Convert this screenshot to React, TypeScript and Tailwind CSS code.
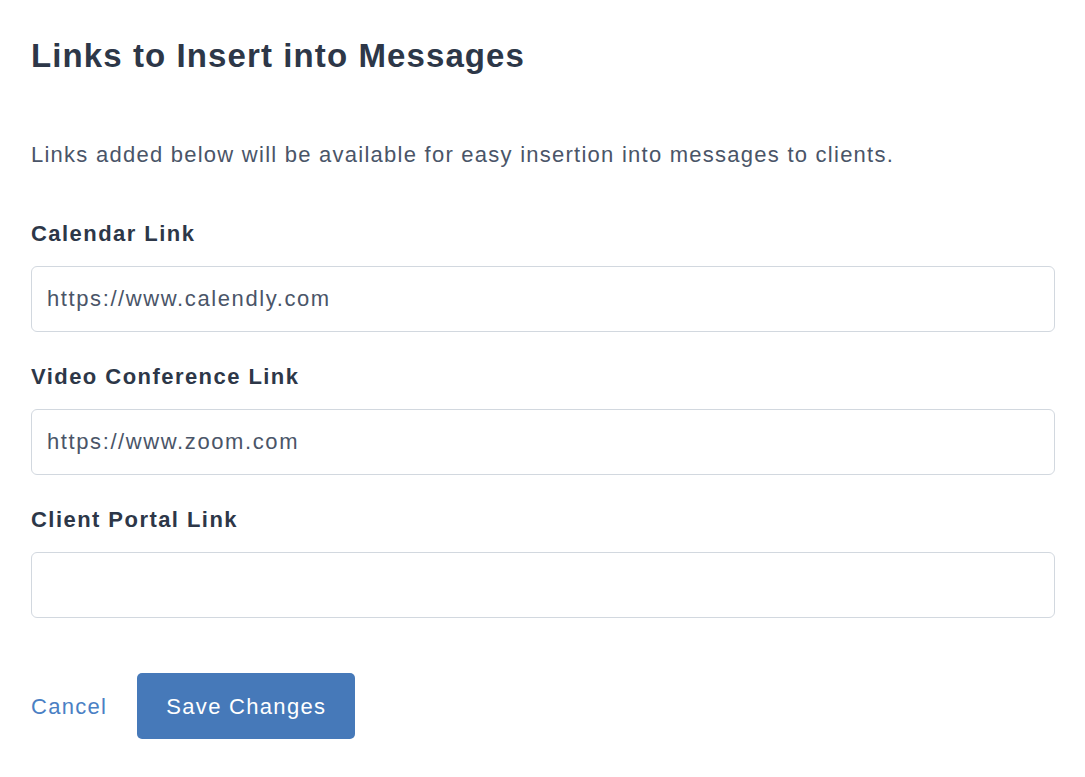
import React, { useState } from 'react';

export default function App() {
  const [calendar, setCalendar] = useState('https://www.calendly.com');
  const [video, setVideo] = useState('https://www.zoom.com');
  const [portal, setPortal] = useState('');

  const fields = [
    { label: 'Calendar Link', value: calendar, set: setCalendar },
    { label: 'Video Conference Link', value: video, set: setVideo },
    { label: 'Client Portal Link', value: portal, set: setPortal },
  ];

  return (
    <div className="min-h-screen bg-white font-['Liberation_Sans',Arial,sans-serif] pl-[31px] pr-[30px] pt-[36px]">
      <h1 className="text-[33px] leading-[40px] font-bold tracking-[1.1px] text-[#2d3748]">Links to Insert into Messages</h1>

      <p className="mt-[65px] text-[22px] leading-[28px] tracking-[1.25px] text-[#4a5568]">
        Links added below will be available for easy insertion into messages to clients.
      </p>

      <div className="mt-[51px] flex flex-col gap-[31px]">
        {fields.map((f) => (
          <div key={f.label} className="flex flex-col">
            <label className="text-[22px] leading-[28px] font-bold tracking-[1.45px] text-[#2d3748]">{f.label}</label>
            <input
              value={f.value}
              onChange={(e) => f.set(e.target.value)}
              className="mt-[18px] h-[66px] w-full rounded-[6px] border border-[#d2d8df] bg-white px-[15px] text-[22px] tracking-[1.6px] text-[#4a5568] outline-none"
            />
          </div>
        ))}
      </div>

      <div className="mt-[55px] flex items-center gap-[30px]">
        <button className="text-[22px] tracking-[1.3px] text-[#4a80c4]">Cancel</button>
        <button className="h-[66px] w-[218px] rounded-[5px] bg-[#4679b9] text-[22px] tracking-[1.3px] text-white">Save Changes</button>
      </div>
    </div>
  );
}
